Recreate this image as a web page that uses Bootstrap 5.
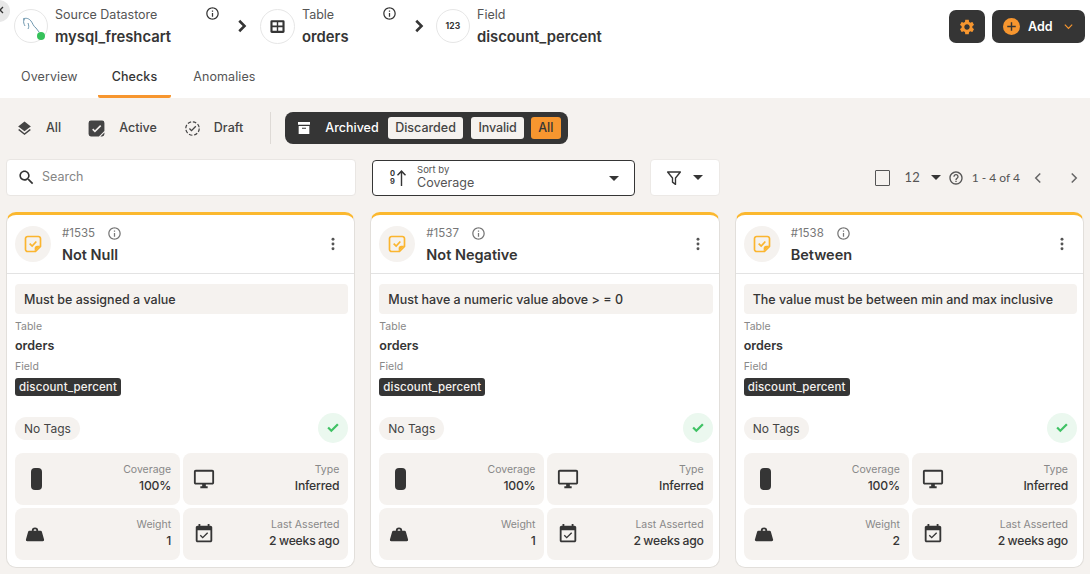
<!DOCTYPE html>
<html lang="en">
<head>
    <meta charset="utf-8">
    <title>Checks</title>
    <link href="https://cdn.jsdelivr.net/npm/bootstrap@5.3.0/dist/css/bootstrap.min.css" rel="stylesheet">
    <style>
        html, body { height: 574px; overflow: hidden; }
        body { font-family: Inter, "Liberation Sans", sans-serif; color: #353535; background: #f5f2ef; position: relative; }
        svg { display: block; flex: none; fill: currentColor; }

        .top-area { background: #fff; height: 98px; }
        .head-row { height: 53px; padding: 9px 5px 0 14px; }
        .crumb { width: 191px; }
        .crumb-t { width: 122px; }
        .crumb-f { width: 200px; }
        .crumb-circle { width: 35px; height: 35px; border: 1px solid #e6e6e6; border-radius: 50%; position: relative; margin-right: 7px; }
        .crumb-circle.slim { width: 34px; height: 34px; }
        .status-dot { position: absolute; right: 2px; bottom: 2px; width: 8px; height: 8px; border-radius: 50%; background: #35c15a; }
        .crumb-label { font-size: 12.5px; line-height: 16px; color: #555; margin-top: -2px; }
        .crumb-name { font-size: 14.8px; line-height: 22px; font-weight: 600; color: #353535; margin-top: 3px; }
        .info-btn { margin-top: -3px; }
        .crumb-chev { margin: 7px 7px 0 13px; }
        .crumb-chev.second { margin: 7px 6px 0 13px; }
        .num-glyph { font-size: 8.5px; font-weight: 700; letter-spacing: .2px; }
        .close-tab { position: absolute; left: 0; top: 0; }

        .dark-btn { background: #353535; color: #fff; border: 0; border-radius: 7px; height: 33px; margin-top: 1px; font-size: 12.5px; font-weight: 600; padding: 0; }
        .gear-btn { width: 36px; color: #f7962f; margin-right: 7px; }
        .add-btn { width: 93px; gap: 8px; padding-left: 11px; }
        .add-btn span { margin-top: 1px; }
        .add-chev { margin-left: 2px; }

        .tab-row { height: 45px; }
        .tab-item { font-size: 12.5px; color: #555; padding: 15px 17px 0; height: 45px; letter-spacing: .1px; border-bottom: 3px solid transparent; }
        .tab-item.first { padding-left: 21px; margin-right: 3px; }
        .tab-item.on { color: #353535; font-weight: 500; border-bottom-color: #f7962f; border-radius: 0 0 2px 2px; margin-right: 5px; padding-left: 14px; padding-right: 14px; }

        .state-row { height: 61px; padding: 14px 0 0 16px; }
        .state-item { font-size: 12.5px; font-weight: 500; color: #444; gap: 13px; margin-right: 27px; height: 32px; }
        .state-item.first { margin-right: 26px; }
        .state-sep { width: 1px; height: 32px; background: #dedad6; margin-right: 14px; }
        .arch-group { background: #353535; border-radius: 8px; height: 32px; padding: 0 7px 0 11px; font-size: 12.5px; font-weight: 500; }
        .arch-main { color: #fff; gap: 13px; margin-right: 9px; }
        .arch-chip { background: #f5f2ef; color: #444; border-radius: 3px; height: 22px; line-height: 22px; padding: 0 7.5px; margin-right: 8px; }
        .arch-chip.narrow { padding: 0 7px; margin-right: 7px; letter-spacing: -.1px; }
        .arch-chip.sel { background: #f7962f; color: #353535; margin: 0; padding: 0 7.5px; }

        .filter-row { height: 53px; padding: 0 5px 0 6px; }
        .search-box { width: 350px; height: 37px; background: #fff; border: 1px solid #e9e6e3; border-radius: 4px; padding-left: 10px; gap: 6px; color: #333; font-size: 12.5px; }
        .search-box span { color: #858585; }
        .sort-box { width: 263px; height: 36px; margin: 1px 0 0 16px; background: #fff; border: 1px solid #353535; border-radius: 4px; padding: 0 15px 0 17px; }
        .sort-glyph { font-size: 7.5px; line-height: 8px; font-weight: 700; text-align: center; margin-right: 1px; }
        .sort-text { margin: -2px 0 0 10px; }
        .sort-small { font-size: 9.5px; line-height: 10px; color: #555; }
        .sort-val { font-size: 12.5px; line-height: 15px; color: #555; }
        .caret-down { width: 0; height: 0; border-left: 5px solid transparent; border-right: 5px solid transparent; border-top: 5px solid #353535; }
        .filter-box { width: 70px; height: 37px; margin-left: 15px; background: #fff; border: 1px solid #ece9e6; border-radius: 4px; padding: 0 16px 0 14px; }
        .pager { font-family: Lato, Inter, sans-serif; font-size: 13px; color: #555; margin-top: 9px; padding-right: 2px; }
        .pick-box { width: 15px; height: 16px; border: 1px solid #555; border-radius: 1px; margin-right: 15px; }
        .pager-num { margin-right: 11px; }
        .pager-caret { margin-right: 7px; }
        .pager-range { margin: 0 9px 0 8px; font-size: 12px; }
        .pager-next { margin-left: 18px; }

        .cards-wrap { display: grid; grid-template-columns: repeat(3, 349.33px); gap: 15px; padding: 0 5px 0 6px; }
        .chk-card { height: 356px; background: #fff; border: 1px solid #e2dfdb; border-top: 3px solid #fbb82f; border-radius: 10px; }
        .chk-head { height: 59px; border-bottom: 1px solid #e3e3e3; padding: 0 13px 0 8px; }
        .chk-icon { width: 36px; height: 36px; background: #f5f2ef; border-radius: 50%; color: #fbb52f; margin-right: 11px; }
        .chk-id { font-size: 11.5px; line-height: 14px; color: #777; gap: 12px; margin-top: 3px; }
        .chk-title { font-size: 14.5px; line-height: 22px; font-weight: 600; margin-top: 3px; }
        .kebab { color: #555; }
        .chk-body { padding: 10px 6px 0 8px; }
        .chk-desc { background: #f5f2ef; border-radius: 4px; height: 30px; line-height: 31px; padding-left: 9px; font-size: 12.5px; font-weight: 500; color: #353535; white-space: nowrap; }
        .mini-label { font-size: 10.5px; line-height: 14px; color: #888; }
        .lbl-table { margin-top: 6px; }
        .mini-val { font-size: 12.5px; font-weight: 600; line-height: 18px; margin-top: 3px; }
        .lbl-field { margin-top: 5px; }
        .field-tag { display: inline-block; background: #353535; color: #f5f2ef; border-radius: 3px; font-size: 11.5px; font-weight: 500; line-height: 18px; padding: 0 4px; margin-top: 4px; vertical-align: top; letter-spacing: .15px; }
        .tag-row { height: 30px; margin-top: 15px; }
        .tag-pill { background: #f5f2ef; border-radius: 12px; font-size: 12px; line-height: 23px; padding: 0 9px; color: #444; }
        .pass-dot { width: 30px; height: 30px; border-radius: 50%; background: #ebf8ef; color: #3fc264; }
        .stat-grid { display: grid; grid-template-columns: 1fr 1fr; gap: 3px; margin-top: 10px; }
        .stat-cell { height: 52px; background: #f5f2ef; border-radius: 8px; padding: 0 9px 2px 10px; }
        .stat-label { font-size: 10.5px; line-height: 15px; color: #888; }
        .stat-val { font-size: 12.2px; line-height: 18px; font-weight: 500; letter-spacing: -.2px; word-spacing: -.5px; }
        .cov-bar { width: 11px; height: 22px; border-radius: 4px; background: #353535; margin: 2px 0 0 6px; }
        .stat-ico { margin-top: 2px; }
        .weight-ico { margin: 0 0 0 -1px; }
    </style>
</head>
<body>

<svg width="0" height="0" class="position-absolute">
    <symbol id="i-info" viewBox="0 0 24 24"><path d="M11 7h2v2h-2zm0 4h2v6h-2zm1-9C6.48 2 2 6.48 2 12s4.48 10 10 10 10-4.48 10-10S17.52 2 12 2zm0 18c-4.41 0-8-3.59-8-8s3.59-8 8-8 8 3.59 8 8-3.59 8-8 8z"/></symbol>
    <symbol id="i-chev" viewBox="0 0 24 24"><path d="M8.6 4.6 6.4 6.8 11.6 12l-5.2 5.200 2.200 2.200L16 12z"/></symbol>
    <symbol id="i-layers" viewBox="0 0 24 24"><path d="M11.990 18.540l-7.370-5.730L3 14.070l9 7 9-7-1.630-1.270-7.380 5.740zM12 16l7.360-5.730L21 9l-9-7-9 7 1.630 1.270L12 16z"/></symbol>
    <symbol id="i-active" viewBox="0 0 24 24"><path fill-rule="evenodd" d="M5 2h14a3 3 0 0 1 3 3v10l-7 7H5a3 3 0 0 1-3-3V5a3 3 0 0 1 3-3zm1.500 11.500L10 17l8-8-1.400-1.400L10 14.200l-2.100-2.100z"/><path d="M17 22l5-5v2a3 3 0 0 1-3 3z"/></symbol>
    <symbol id="i-draft" viewBox="0 0 24 24"><circle cx="12" cy="12" r="9.500" fill="none" stroke="currentColor" stroke-width="1.700" stroke-dasharray="5 2.500"/><path d="M10.600 16.200 7 12.600l1.300-1.300 2.300 2.300 5.400-5.400 1.300 1.300z"/></symbol>
    <symbol id="i-archive" viewBox="0 0 24 24"><path fill-rule="evenodd" d="M3 3h18v4H3zm1 6h16v12H4zm5 2.500V13h6v-1.500z"/></symbol>
    <symbol id="i-gear" viewBox="0 0 24 24"><path d="M19.140 12.940c.04-.3.060-.61.060-.94 0-.32-.02-.64-.07-.94l2.030-1.580c.18-.14.230-.41.120-.61l-1.920-3.320c-.12-.22-.37-.29-.59-.22l-2.390.96c-.5-.38-1.030-.7-1.620-.94l-.36-2.540c-.04-.24-.24-.41-.48-.41h-3.840c-.24 0-.43.170-.47.410l-.36 2.540c-.59.240-1.130.570-1.620.940l-2.390-.96c-.22-.08-.47 0-.59.220L2.740 8.870c-.12.210-.08.470.120.610l2.030 1.580c-.05.3-.09.630-.09.940s.02.640.07.940l-2.030 1.580c-.18.140-.23.410-.12.610l1.920 3.320c.12.220.37.290.59.220l2.390-.96c.5.380 1.030.7 1.620.94l.36 2.540c.05.240.24.410.48.410h3.840c.24 0 .44-.17.47-.41l.36-2.540c.59-.24 1.130-.56 1.620-.94l2.390.96c.22.080.47 0 .59-.22l1.920-3.320c.12-.22.070-.47-.12-.61l-2.010-1.580zM12 15.600c-1.980 0-3.600-1.620-3.600-3.600s1.620-3.600 3.600-3.600 3.600 1.620 3.600 3.600-1.620 3.600-3.600 3.600z"/></symbol>
    <symbol id="i-search" viewBox="0 0 24 24"><path d="M15.500 14h-.79l-.28-.27C15.410 12.590 16 11.110 16 9.500 16 5.910 13.090 3 9.500 3S3 5.910 3 9.500 5.910 16 9.500 16c1.610 0 3.090-.59 4.230-1.570l.27.28v.79l5 4.990L20.490 19l-4.990-5zm-6 0C7.010 14 5 11.990 5 9.500S7.010 5 9.500 5 14 7.010 14 9.500 11.990 14 9.500 14z"/></symbol>
    <symbol id="i-funnel" viewBox="0 0 24 24"><path fill="none" stroke="currentColor" stroke-width="1.800" stroke-linejoin="round" d="M3.500 4h17l-6.500 8v8.500l-4-3V12z"/></symbol>
    <symbol id="i-help" viewBox="0 0 24 24"><path d="M11 18h2v-2h-2v2zm1-16C6.480 2 2 6.480 2 12s4.480 10 10 10 10-4.480 10-10S17.520 2 12 2zm0 18c-4.410 0-8-3.590-8-8s3.590-8 8-8 8 3.590 8 8-3.590 8-8 8zm0-14c-2.210 0-4 1.790-4 4h2c0-1.100.9-2 2-2s2 .9 2 2c0 2-3 1.750-3 5h2c0-2.250 3-2.500 3-5 0-2.210-1.790-4-4-4z"/></symbol>
    <symbol id="i-note" viewBox="0 0 24 24"><path fill="none" stroke="currentColor" stroke-width="2" stroke-linejoin="round" d="M5.500 3h13A2.500 2.500 0 0 1 21 5.500V15l-6 6H5.500A2.500 2.500 0 0 1 3 18.500v-13A2.500 2.500 0 0 1 5.500 3z"/><path d="M14 21v-4a3 3 0 0 1 3-3h4z"/><path fill="none" stroke="currentColor" stroke-width="2" d="M8 11.500l3 3 5-5.500"/></symbol>
    <symbol id="i-kebab" viewBox="0 0 24 24"><circle cx="12" cy="5" r="2.200"/><circle cx="12" cy="12" r="2.200"/><circle cx="12" cy="19" r="2.200"/></symbol>
    <symbol id="i-check" viewBox="0 0 24 24"><path d="M9.500 18.500 3.500 12.500l2.400-2.400 3.600 3.600 8.600-8.600 2.400 2.400z"/></symbol>
    <symbol id="i-desktop" viewBox="0 0 24 24"><path d="M21 2H3c-1.100 0-2 .9-2 2v12c0 1.100.9 2 2 2h7v2H8v2h8v-2h-2v-2h7c1.100 0 2-.9 2-2V4c0-1.100-.9-2-2-2zm0 14H3V4h18v12z"/></symbol>
    <symbol id="i-weight" viewBox="0 0 24 24"><path fill-rule="evenodd" d="M8.500 9.500a3.500 3.500 0 1 1 7 0H18a1.500 1.500 0 0 1 1.500 1.200l2.400 8.300A1.600 1.600 0 0 1 20.400 21H3.600a1.600 1.600 0 0 1-1.500-2l2.400-8.300A1.500 1.500 0 0 1 6 9.500zm2 0h3a1.500 1.500 0 0 0-3 0z"/></symbol>
    <symbol id="i-event" viewBox="0 0 24 24"><path d="M16.530 11.060L15.470 10l-4.880 4.880-2.120-2.120-1.060 1.060L10.590 17l5.940-5.940zM19 3h-1V1h-2v2H8V1H6v2H5c-1.110 0-1.990.9-1.990 2L3 19c0 1.100.89 2 2 2h14c1.100 0 2-.9 2-2V5c0-1.100-.9-2-2-2zm0 16H5V8h14v11z"/></symbol>
</svg>

<svg class="close-tab" width="11" height="23" viewBox="0 0 11 23"><circle cx="-1" cy="11" r="11" fill="#e8e8e8"/><path fill="none" stroke="#333" stroke-width="1.300" d="M-3 7l6 6m0-6l-6 6"/></svg>

<div class="top-area">
    <div class="head-row d-flex align-items-start">
        <div class="crumb d-flex align-items-start">
            <div class="crumb-circle slim d-flex align-items-center justify-content-center">
                <svg width="20" height="18" viewBox="0 0 20 18"><path fill="none" stroke="#4d7f9c" stroke-width=".8" d="M2 2c3-1.500 6-.5 8 2s2 5 5 7l3 4M3 3c-1 2 0 4 1 6M7 6c1 3 1 4 0 6M4 2 2 3"/></svg>
                <span class="status-dot"></span>
            </div>
            <div class="flex-grow-1">
                <div class="crumb-label">Source Datastore</div>
                <div class="crumb-name">mysql_freshcart</div>
            </div>
        </div>
        <svg class="info-btn" width="15" height="15"><use href="#i-info"/></svg>
        <svg class="crumb-chev" width="20" height="20"><use href="#i-chev"/></svg>
        <div class="crumb crumb-t d-flex align-items-start">
            <div class="crumb-circle d-flex align-items-center justify-content-center">
                <svg width="17" height="17" viewBox="0 0 24 24"><path fill-rule="evenodd" d="M4 3h16a2 2 0 0 1 2 2v14a2 2 0 0 1-2 2H4a2 2 0 0 1-2-2V5a2 2 0 0 1 2-2zm1 3v4.500h6V6zm8 0v4.500h6V6zm-8 7v5h6v-5zm8 0v5h6v-5z"/></svg>
            </div>
            <div class="flex-grow-1">
                <div class="crumb-label">Table</div>
                <div class="crumb-name">orders</div>
            </div>
        </div>
        <svg class="info-btn" width="15" height="15"><use href="#i-info"/></svg>
        <svg class="crumb-chev second" width="20" height="20"><use href="#i-chev"/></svg>
        <div class="crumb crumb-f d-flex align-items-start">
            <div class="crumb-circle slim d-flex align-items-center justify-content-center"><span class="num-glyph">123</span></div>
            <div class="flex-grow-1">
                <div class="crumb-label">Field</div>
                <div class="crumb-name">discount_percent</div>
            </div>
        </div>
        <button class="dark-btn gear-btn d-flex align-items-center justify-content-center ms-auto">
            <svg width="18" height="18"><use href="#i-gear"/></svg>
        </button>
        <button class="dark-btn add-btn d-flex align-items-center">
            <svg width="17" height="17" viewBox="0 0 24 24"><circle cx="12" cy="12" r="12" fill="#f7962f"/><path fill="#353535" d="M11 6h2v5h5v2h-5v5h-2v-5H6v-2h5z"/></svg>
            <span>Add</span>
            <svg class="add-chev" width="11" height="11" viewBox="0 0 12 12"><path fill="none" stroke="#f7962f" stroke-width="1.300" d="M2 4l4 4 4-4"/></svg>
        </button>
    </div>
    <div class="tab-row d-flex">
        <div class="tab-item first">Overview</div>
        <div class="tab-item on">Checks</div>
        <div class="tab-item">Anomalies</div>
    </div>
</div>

<div class="state-row d-flex align-items-start">
    <div class="state-item first d-flex align-items-center"><svg width="17" height="17"><use href="#i-layers"/></svg>All</div>
    <div class="state-item d-flex align-items-center"><svg width="19" height="19"><use href="#i-active"/></svg>Active</div>
    <div class="state-item d-flex align-items-center"><svg width="17" height="17"><use href="#i-draft"/></svg>Draft</div>
    <div class="state-sep"></div>
    <div class="arch-group d-flex align-items-center">
        <div class="arch-main d-flex align-items-center"><svg width="16" height="16"><use href="#i-archive"/></svg>Archived</div>
        <div class="arch-chip">Discarded</div>
        <div class="arch-chip narrow">Invalid</div>
        <div class="arch-chip sel">All</div>
    </div>
</div>

<div class="filter-row d-flex align-items-start">
    <div class="search-box d-flex align-items-center">
        <svg width="19" height="19"><use href="#i-search"/></svg>
        <span>Search</span>
    </div>
    <div class="sort-box d-flex align-items-center">
        <div class="sort-glyph">0<br>9</div>
        <svg width="11" height="18" viewBox="0 0 11 18"><path d="M4.800 17V4L2 6.800 1 5.800 5.500 1 10 5.800 9 6.800 6.200 4v13z"/></svg>
        <div class="sort-text">
            <div class="sort-small">Sort by</div>
            <div class="sort-val">Coverage</div>
        </div>
        <span class="caret-down ms-auto"></span>
    </div>
    <div class="filter-box d-flex align-items-center justify-content-between">
        <svg width="18" height="18"><use href="#i-funnel"/></svg>
        <span class="caret-down"></span>
    </div>
    <div class="pager d-flex align-items-center ms-auto">
        <span class="pick-box"></span>
        <span class="pager-num">12</span>
        <span class="caret-down pager-caret"></span>
        <svg width="16" height="16"><use href="#i-help"/></svg>
        <span class="pager-range">1 - 4 of 4</span>
        <svg width="18" height="18" viewBox="0 0 24 24"><path fill="none" stroke="#666" stroke-width="2" d="M15 6l-6 6 6 6"/></svg>
        <svg class="pager-next" width="18" height="18" viewBox="0 0 24 24"><path fill="none" stroke="#666" stroke-width="2" d="M9 6l6 6-6 6"/></svg>
    </div>
</div>

<div class="cards-wrap" id="cards"></div>

<template id="card-tpl">
    <div class="chk-card">
        <div class="chk-head d-flex align-items-center">
            <div class="chk-icon d-flex align-items-center justify-content-center"><svg width="20" height="20"><use href="#i-note"/></svg></div>
            <div class="flex-grow-1">
                <div class="chk-id d-flex align-items-center"><span data-f="id"></span><svg width="15" height="15"><use href="#i-info"/></svg></div>
                <div class="chk-title" data-f="title"></div>
            </div>
            <svg class="kebab" width="16" height="16"><use href="#i-kebab"/></svg>
        </div>
        <div class="chk-body">
            <div class="chk-desc" data-f="desc"></div>
            <div class="mini-label lbl-table">Table</div>
            <div class="mini-val">orders</div>
            <div class="mini-label lbl-field">Field</div>
            <div><span class="field-tag">discount_percent</span></div>
            <div class="tag-row d-flex align-items-center justify-content-between">
                <span class="tag-pill">No Tags</span>
                <span class="pass-dot d-flex align-items-center justify-content-center"><svg width="16" height="16"><use href="#i-check"/></svg></span>
            </div>
            <div class="stat-grid">
                <div class="stat-cell d-flex align-items-center justify-content-between">
                    <span class="cov-bar"></span>
                    <div class="text-end"><div class="stat-label">Coverage</div><div class="stat-val">100%</div></div>
                </div>
                <div class="stat-cell d-flex align-items-center justify-content-between">
                    <svg class="stat-ico" width="22" height="22"><use href="#i-desktop"/></svg>
                    <div class="text-end"><div class="stat-label">Type</div><div class="stat-val">Inferred</div></div>
                </div>
                <div class="stat-cell d-flex align-items-center justify-content-between">
                    <svg class="weight-ico" width="22" height="22"><use href="#i-weight"/></svg>
                    <div class="text-end"><div class="stat-label">Weight</div><div class="stat-val" data-f="weight"></div></div>
                </div>
                <div class="stat-cell d-flex align-items-center justify-content-between">
                    <svg class="stat-ico" width="22" height="22"><use href="#i-event"/></svg>
                    <div class="text-end"><div class="stat-label">Last Asserted</div><div class="stat-val">2 weeks ago</div></div>
                </div>
            </div>
        </div>
    </div>
</template>

<script src="https://cdn.jsdelivr.net/npm/bootstrap@5.3.0/dist/js/bootstrap.bundle.min.js"></script>
<script>
    const checks = [
        { id: '#1535', title: 'Not Null', desc: 'Must be assigned a value', weight: '1' },
        { id: '#1537', title: 'Not Negative', desc: 'Must have a numeric value above > = 0', weight: '1' },
        { id: '#1538', title: 'Between', desc: 'The value must be between min and max inclusive', weight: '2' }
    ];
    const tpl = document.getElementById('card-tpl');
    checks.forEach(c => {
        const node = tpl.content.cloneNode(true);
        node.querySelectorAll('[data-f]').forEach(el => { el.textContent = c[el.dataset.f]; });
        document.getElementById('cards').appendChild(node);
    });
</script>
</body>
</html>
